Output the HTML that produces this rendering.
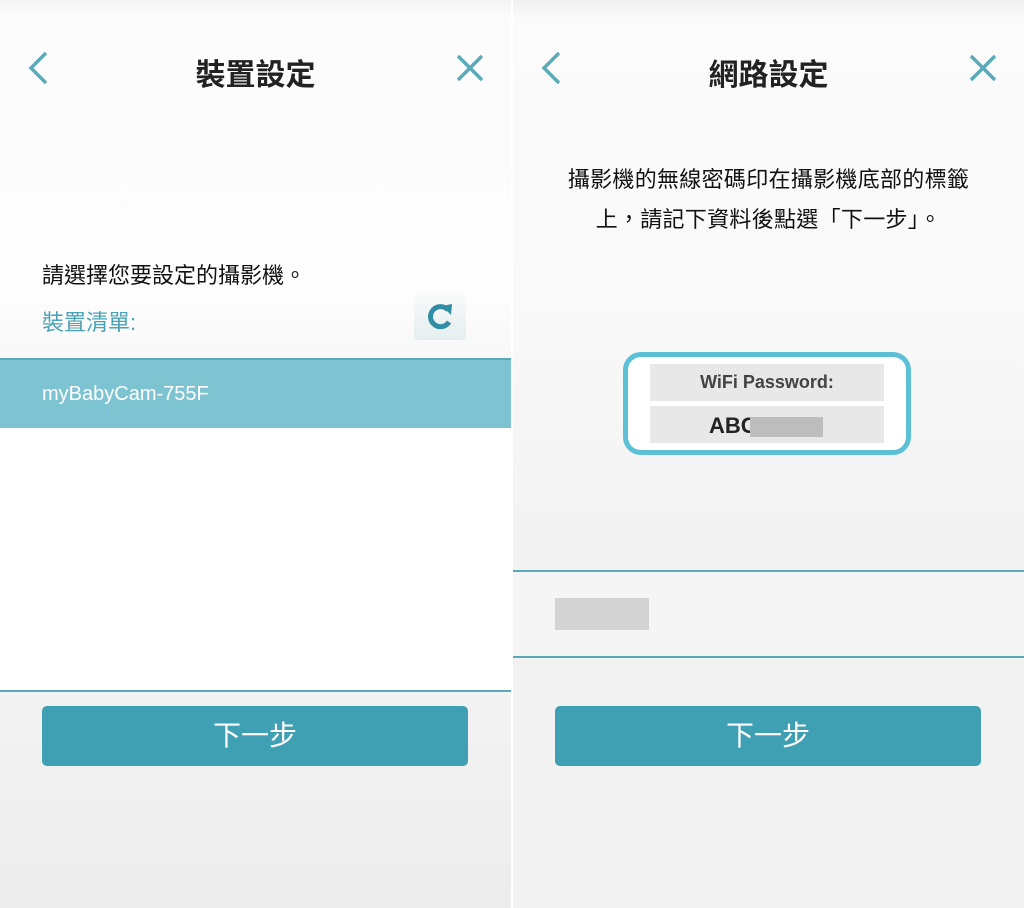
<!DOCTYPE html>
<html><head><meta charset="utf-8"><style>
*{margin:0;padding:0;box-sizing:border-box}
body{width:1024px;height:908px;background:#fff;position:relative;overflow:hidden;font-family:"Liberation Sans","Noto Sans CJK TC",sans-serif}
.p{position:absolute;top:0;height:908px;width:511px}
#L{left:0;background:linear-gradient(#f4f4f4 0,#fcfcfc 20px,#fdfdfd 300px,#f8f8f8 350px)}
#R{left:513px;width:511px;background:linear-gradient(#f0f0f0 0,#fbfbfb 20px,#f9f9f9 300px,#f2f2f2 560px,#f3f3f3 908px)}
.t{position:absolute;top:50px;width:100%;text-align:center;font-size:30px;color:#222;font-weight:bold}
.a{position:absolute;}
.btn{position:absolute;left:42px;top:706px;width:426px;height:60px;background:#3f9fb3;border-radius:5px;color:#fff;font-size:28px;text-align:center;line-height:60px}
</style></head><body>
<div class="p" id="L">
<svg class="a" style="left:26px;top:50px" width="26" height="36"><path d="M20 3 L5 18 L20 33" stroke="#5aaab8" stroke-width="3.5" fill="none"/></svg>
<div class="t">裝置設定</div>
<svg class="a" style="left:455px;top:53px" width="30" height="30"><path d="M3 3L27 27M27 3L3 27" stroke="#5aaab8" stroke-width="3.5"/></svg>
<div class="a" style="left:42px;top:258px;font-size:22px;color:#111">請選擇您要設定的攝影機。</div>
<div class="a" style="left:42px;top:305px;font-size:22px;color:#4aa3b5">裝置清單:</div>
<div class="a" style="left:414px;top:292px;width:52px;height:48px;background:linear-gradient(#fafafa,#e4eef0);border-radius:3px"></div>
<svg class="a" style="left:424px;top:300px" width="32" height="32"><path d="M24 10 A10 10 0 1 0 25 22" stroke="#2f8ea3" stroke-width="5" fill="none"/><path d="M18 6 L28 4 L27 15 Z" fill="#2f8ea3"/></svg>
<div class="a" style="left:0;top:358px;width:511px;height:70px;background:#7ec3d1;border-top:2px solid #5aa9ba;color:#fff;font-size:20px;line-height:68px;padding-left:42px">myBabyCam-755F</div>
<div class="a" style="left:0;top:428px;width:511px;height:262px;background:#fff"></div>
<div class="a" style="left:0;top:690px;width:511px;height:218px;background:linear-gradient(#f3f3f3,#ececec);border-top:2px solid #5aa9ba"></div>
<div class="btn">下一步</div>
</div>
<div class="p" id="R">
<svg class="a" style="left:26px;top:50px" width="26" height="36"><path d="M20 3 L5 18 L20 33" stroke="#5aaab8" stroke-width="3.5" fill="none"/></svg>
<div class="t">網路設定</div>
<svg class="a" style="left:455px;top:53px" width="30" height="30"><path d="M3 3L27 27M27 3L3 27" stroke="#5aaab8" stroke-width="3.5"/></svg>
<div class="a" style="left:0;top:160px;width:511px;text-align:center;font-size:22px;color:#111;line-height:40px;letter-spacing:0.3px">攝影機的無線密碼印在攝影機底部的標籤<br>上，請記下資料後點選「下一步」。</div>
<div class="a" style="left:110px;top:352px;width:288px;height:103px;border:5px solid #5cc0d6;border-radius:18px;background:#fff"></div>
<div class="a" style="left:137px;top:364px;width:234px;height:37px;background:#e8e8e8;text-align:center;line-height:37px;font-size:18px;color:#444;font-weight:bold">WiFi Password:</div>
<div class="a" style="left:137px;top:406px;width:234px;height:37px;background:#e8e8e8;font-size:22px;line-height:40px;padding-left:59px;color:#222;font-weight:bold">ABC</div>
<div class="a" style="left:237px;top:417px;width:73px;height:20px;background:#bdbdbd"></div>
<div class="a" style="left:0;top:570px;width:511px;height:88px;border-top:2px solid #5aa9ba;border-bottom:2px solid #5aa9ba;background:#f5f5f5"></div>
<div class="a" style="left:42px;top:598px;width:94px;height:32px;background:#d3d3d3"></div>
<div class="btn">下一步</div>
</div>
</body></html>
